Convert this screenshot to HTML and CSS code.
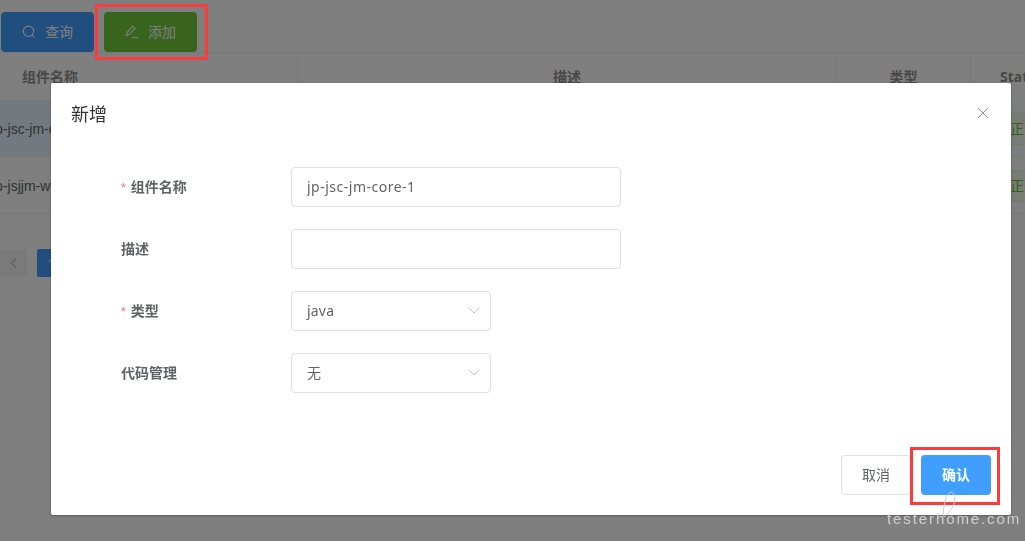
FILE: index.html
```html
<!DOCTYPE html>
<html lang="zh-CN">
  <head>
    <meta charset="UTF-8" />
    <meta name="viewport" content="width=device-width, initial-scale=1.0" />
    <title>组件管理</title>
    <link rel="stylesheet" href="styles.css">
  </head>
  <body>
    <div class="page">
      <div class="toolbar">
        <button class="btn btn-query">
          <svg class="btn-icon" viewBox="0 0 14 14"><circle cx="6.5" cy="6.3" r="5.2" /><path d="M10.3 10.2 L12.4 12.4" /></svg>
          <span>查询</span>
        </button>
        <button class="btn btn-add">
          <svg class="btn-icon" viewBox="0 0 14 14"><path d="M1.4 10.4 L2 7.6 L7.6 1.2 L10 3.2 L4.4 9.6 Z" /><path d="M6.6 12.6 H13" /></svg>
          <span>添加</span>
        </button>
      </div>

      <div class="table">
        <div class="row row-head">
          <div class="cell col-name">组件名称</div>
          <div class="cell col-desc">描述</div>
          <div class="cell col-type">类型</div>
          <div class="cell col-status">Status</div>
        </div>
        <div class="row row-selected">
          <div class="cell col-name"><span class="name">jp-jsc-jm-core-1</span></div>
          <div class="cell col-desc"></div>
          <div class="cell col-type">java</div>
          <div class="cell col-status"><span class="tag">正常</span></div>
        </div>
        <div class="row">
          <div class="cell col-name"><span class="name">jp-jsjjm-web</span></div>
          <div class="cell col-desc"></div>
          <div class="cell col-type">java</div>
          <div class="cell col-status"><span class="tag">正常</span></div>
        </div>
      </div>

      <div class="pager">
        <span class="pager-btn">
          <svg viewBox="0 0 10 12"><path d="M7 1.5 L2.5 6 L7 10.5" /></svg>
        </span>
        <span class="pager-btn pager-active">1</span>
      </div>
    </div>

    <div class="overlay">
      <div class="dialog">
        <div class="dialog-head">
          <span class="dialog-title">新增</span>
          <svg class="dialog-close" viewBox="0 0 12 12"><path d="M1 1 L11 11 M11 1 L1 11" /></svg>
        </div>

        <form class="form">
          <div class="form-row">
            <label class="form-label"><i class="req">*</i>组件名称</label>
            <input class="input" type="text" value="jp-jsc-jm-core-1" />
          </div>
          <div class="form-row">
            <label class="form-label">描述</label>
            <input class="input" type="text" />
          </div>
          <div class="form-row">
            <label class="form-label"><i class="req">*</i>类型</label>
            <div class="select">
              <span>java</span>
              <svg viewBox="0 0 12 7"><path d="M0.5 0.5 L6 6 L11.5 0.5" /></svg>
            </div>
          </div>
          <div class="form-row">
            <label class="form-label">代码管理</label>
            <div class="select">
              <span>无</span>
              <svg viewBox="0 0 12 7"><path d="M0.5 0.5 L6 6 L11.5 0.5" /></svg>
            </div>
          </div>
        </form>

        <div class="dialog-foot">
          <button class="btn btn-cancel">取消</button>
          <button class="btn btn-ok">确认</button>
        </div>
      </div>
    </div>

    <div class="mark mark-add"></div>
    <div class="mark mark-ok"></div>

    <div class="watermark">
      <svg class="watermark-loop" viewBox="0 0 14 28"><path d="M1 26 C1 16 4 2 9 1 C13 1 14 9 11 15 C8 20 5 24 2 26" /></svg>
      <span>testerhome.com</span>
    </div>
  </body>
</html>
```

FILE: styles.css
```css
html,
body {
  margin: 0;
  padding: 0;
  height: 100%;
  overflow: hidden;
}
body {
  font-family: "Noto Sans", "Noto Sans CJK SC", sans-serif;
  font-size: 14px;
  color: #606266;
  background-color: #fff;
}
.page {
  width: 1025px;
  overflow: hidden;
}
.toolbar {
  display: flex;
  gap: 10px;
  padding: 12px 0 0 1px;
  height: 40px;
}
.btn {
  display: inline-flex;
  align-items: center;
  justify-content: center;
  height: 40px;
  border: 1px solid transparent;
  border-radius: 4px;
  font-family: inherit;
  font-size: 14px;
  line-height: 18px;
  color: #fff;
  padding: 0;
}
.btn-query,
.btn-add {
  width: 93px;
  gap: 9px;
}
.btn-query {
  background-color: #409eff;
}
.btn-add {
  background-color: #72c83c;
}
.btn-icon {
  width: 14px;
  height: 14px;
  fill: none;
  stroke: #fff;
  stroke-width: 1.1;
}
.table {
  border-top: 1px solid #ebeef5;
}
.row {
  display: flex;
  height: 56px;
  border-bottom: 1px solid #ebeef5;
  align-items: center;
}
.row-head {
  height: 47px;
  border-bottom: 0;
  font-weight: bold;
  color: #909090;
}
.row-selected {
  background: linear-gradient(90deg, #e6f4ff, #f8fcff);
}
.cell {
  box-sizing: border-box;
  height: 100%;
  display: flex;
  align-items: center;
  flex-shrink: 0;
}
.row-head .cell {
  border-right: 1px solid #ebeef5;
  justify-content: center;
  align-items: flex-end;
  padding-bottom: 14px;
}
.col-name {
  width: 298px;
}
.row-head .col-name {
  justify-content: flex-start;
  padding-left: 22px;
}
.col-desc {
  width: 539px;
}
.col-type {
  width: 134px;
  justify-content: center;
}
.col-status {
  width: 120px;
}
.row-head .col-status {
  justify-content: flex-start;
  padding-left: 29px;
}
.name {
  margin: 2px 0 0 -8px;
  font-family: "Liberation Sans", sans-serif;
  white-space: nowrap;
}
.tag {
  margin: 1px 0 0 29px;
  padding: 0 9px;
  height: 30px;
  line-height: 30px;
  background-color: #f0f9eb;
  border: 1px solid #e1f3d8;
  color: #67c23a;
  border-radius: 4px;
}
.pager {
  display: flex;
  gap: 10px;
  margin-top: 35px;
}
.pager-btn {
  display: flex;
  align-items: center;
  justify-content: center;
  width: 27px;
  height: 28px;
  background-color: #f4f4f5;
  border-radius: 2px;
  color: #fff;
  font-size: 13px;
}
.pager-btn svg {
  width: 10px;
  height: 12px;
  fill: none;
  stroke: #c0c4cc;
  stroke-width: 1.6;
}
.pager-active {
  width: 28px;
  background-color: #409eff;
}
.overlay {
  position: fixed;
  top: 0;
  right: 0;
  bottom: 0;
  left: 0;
  background-color: rgba(0, 0, 0, 0.5);
}
.dialog {
  box-sizing: border-box;
  width: 960px;
  height: 432px;
  margin: 83px 0 0 51px;
  background-color: #fff;
  border-radius: 2px;
  box-shadow: 0 1px 3px rgba(0, 0, 0, 0.3);
  display: flex;
  flex-direction: column;
}
.dialog-head {
  display: flex;
  justify-content: space-between;
  align-items: center;
  height: 62px;
  padding: 0 22px 0 20px;
}
.dialog-title {
  font-size: 18px;
  line-height: 24px;
  color: #303133;
}
.dialog-close {
  width: 12px;
  height: 12px;
  margin-top: -3px;
  fill: none;
  stroke: #909399;
  stroke-width: 1;
}
.form {
  padding: 22px 0 0 70px;
  display: flex;
  flex-direction: column;
  gap: 22px;
}
.form-row {
  display: flex;
  align-items: center;
  height: 40px;
}
.form-label {
  width: 170px;
  font-weight: bold;
  line-height: 18px;
}
.req {
  font-family: "Liberation Sans", sans-serif;
  font-size: 12px;
  color: #f56c6c;
  font-style: normal;
  font-weight: normal;
  margin-right: 5px;
}
.input,
.select {
  box-sizing: border-box;
  height: 40px;
  border: 1px solid #dcdfe6;
  border-radius: 4px;
  padding: 0 15px;
  font-family: inherit;
  font-size: 14px;
  color: #606266;
  background-color: #fff;
}
.input {
  width: 330px;
  padding-bottom: 2px;
  letter-spacing: 0.5px;
}
.select {
  width: 200px;
  display: flex;
  align-items: center;
  justify-content: space-between;
  padding-right: 10px;
  padding-bottom: 2px;
}
.select span {
  letter-spacing: 0.2px;
}
.select svg {
  width: 12px;
  height: 7px;
  fill: none;
  stroke: #c0c4cc;
  stroke-width: 1;
}
.dialog-foot {
  margin-top: auto;
  display: flex;
  justify-content: flex-end;
  gap: 10px;
  padding: 0 20px 20px 0;
}
.btn-cancel,
.btn-ok {
  width: 70px;
}
.btn-cancel {
  background-color: #fff;
  border-color: #dcdfe6;
  color: #606266;
}
.btn-ok {
  background-color: #409eff;
  font-weight: bold;
}
.mark {
  position: fixed;
  box-sizing: border-box;
  border: 3px solid #fa3c3c;
}
.mark-add {
  left: 95px;
  top: 4px;
  width: 113px;
  height: 56px;
}
.mark-ok {
  left: 910px;
  top: 447px;
  width: 90px;
  height: 58px;
}
.watermark {
  position: fixed;
  left: 887px;
  top: 509px;
  font-size: 15px;
  line-height: 20px;
  letter-spacing: 1.9px;
  font-family: "Liberation Sans", sans-serif;
  color: #cfcfcf;
  white-space: nowrap;
}
.watermark-loop {
  position: absolute;
  left: 55px;
  top: -18px;
  width: 14px;
  height: 28px;
  fill: none;
  stroke: #cfcfcf;
  stroke-width: 1;
}
```
